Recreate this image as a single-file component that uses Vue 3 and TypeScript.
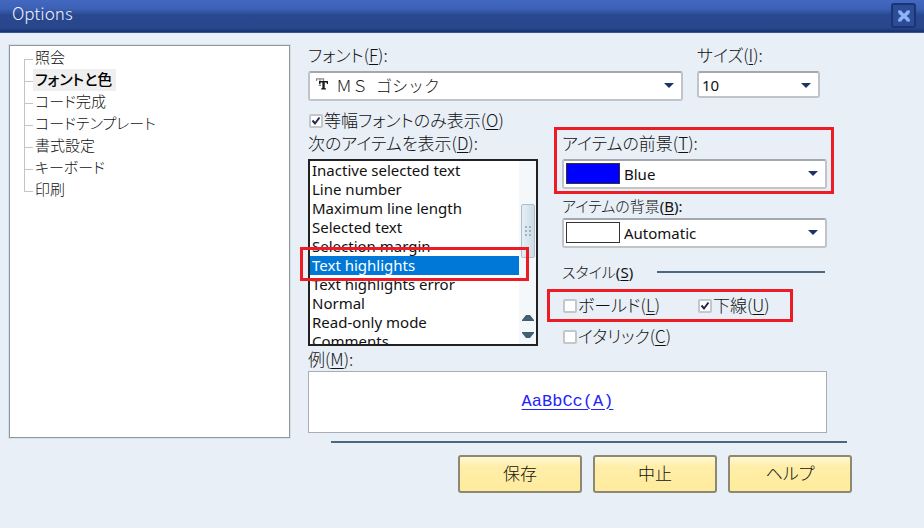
<script setup lang="ts">
import { ref } from 'vue'

const categories: string[] = [
  '照会',
  'フォントと色',
  'コード完成',
  'コードテンプレート',
  '書式設定',
  'キーボード',
  '印刷',
]
const activeCategory = ref('フォントと色')

const items: string[] = [
  'Inactive selected text',
  'Line number',
  'Maximum line length',
  'Selected text',
  'Selection margin',
  'Text highlights',
  'Text highlights error',
  'Normal',
  'Read-only mode',
  'Comments',
]
const activeItem = ref('Text highlights')

const fontName = ref('ＭＳ\u2002ゴシック')
const fontSize = ref('10')
const foreground = ref('Blue')
const background = ref('Automatic')
const fixedOnly = ref(true)
const bold = ref(false)
const underline = ref(true)
const italic = ref(false)
</script>

<template>
  <div class="dialog" role="dialog" aria-labelledby="dialog-title">
    <header class="titlebar">
      <h1 id="dialog-title">Options</h1>
      <button class="close" type="button" aria-label="Close">
        <svg width="14" height="14" viewBox="0 0 14 14" aria-hidden="true">
          <path d="M2.5 3 L11.5 11 M11.5 3 L2.5 11" stroke="#8fb4f8" stroke-width="3.6" fill="none" />
          <path d="M1 2.5h3.5M9.5 2.5H13M1 11.5h3.5M9.5 11.5H13" stroke="#8fb4f8" stroke-width="2" />
        </svg>
      </button>
    </header>

    <div class="content">
      <nav class="tree">
        <ul>
          <li v-for="c in categories" :key="c">
            <button
              type="button"
              :class="{ active: c === activeCategory }"
              @click="activeCategory = c"
            >{{ c }}</button>
          </li>
        </ul>
      </nav>

      <main class="settings">
        <div class="font-row">
          <div class="field font-field">
            <label class="caption" for="font">フォント(<u>F</u>):</label>
            <div class="combo">
              <select id="font" v-model="fontName" class="with-icon">
                <option>{{ fontName }}</option>
              </select>
              <svg class="tt" width="13" height="12" viewBox="0 0 13 12" aria-hidden="true">
                <path d="M0.5 3V0.8H7.5V3M4 1V7.5M2.5 7.5H5" stroke="#8a8a8a" stroke-width="1.2" fill="none" />
                <path d="M3 3H12V6H11L10.5 4.4H8.7V10L10 10.4V11.4H5.2V10.4L6.4 10V4.4H4.5L4 6H3Z" fill="#1c1c1c" />
              </svg>
              <svg class="arrow" width="10" height="5" viewBox="0 0 10 5" aria-hidden="true"><path d="M0 0H10L5 5Z" /></svg>
            </div>
          </div>
          <div class="field size-field">
            <label class="caption" for="size">サイズ(<u>I</u>):</label>
            <div class="combo">
              <select id="size" v-model="fontSize" class="short">
                <option>10</option>
              </select>
              <svg class="arrow" width="10" height="5" viewBox="0 0 10 5" aria-hidden="true"><path d="M0 0H10L5 5Z" /></svg>
            </div>
          </div>
        </div>

        <label class="check fixed"><input v-model="fixedOnly" type="checkbox" /><span>等幅フォントのみ表示(<u>O</u>)</span></label>

        <div class="columns">
          <div class="list-col">
            <div id="list-caption" class="caption">次のアイテムを表示(<u>D</u>):</div>
            <div class="list">
              <div class="rows" role="radiogroup" aria-labelledby="list-caption">
                <label v-for="i in items" :key="i" :class="{ selected: i === activeItem }">
                  <input v-model="activeItem" type="radio" name="item" :value="i" />{{ i }}
                </label>
              </div>
              <div class="scroll" aria-hidden="true">
                <div class="thumb"><i v-for="n in 6" :key="n"></i></div>
                <svg width="12" height="26" viewBox="0 0 12 26">
                  <path d="M0 7V6L4 1H8L12 6V7ZM0 18H12V19L8 24H4L0 19Z" fill="#435f74" />
                </svg>
              </div>
              <span class="mark mark-list"></span>
            </div>
          </div>

          <div class="style-col">
            <div class="field">
              <label class="caption" for="fg">アイテムの前景(<u>T</u>):</label>
              <div class="combo">
                <select id="fg" v-model="foreground" class="with-swatch">
                  <option>Blue</option>
                </select>
                <span class="swatch blue"></span>
                <svg class="arrow" width="10" height="5" viewBox="0 0 10 5" aria-hidden="true"><path d="M0 0H10L5 5Z" /></svg>
              </div>
              <span class="mark mark-fg"></span>
            </div>
            <div class="field bg-field">
              <label class="caption small" for="bg">アイテムの背景<span class="ui">(<u>B</u>):</span></label>
              <div class="combo">
                <select id="bg" v-model="background" class="with-swatch">
                  <option>Automatic</option>
                </select>
                <span class="swatch"></span>
                <svg class="arrow" width="10" height="5" viewBox="0 0 10 5" aria-hidden="true"><path d="M0 0H10L5 5Z" /></svg>
              </div>
            </div>
            <fieldset>
              <legend><span>スタイル<span class="ui">(<u>S</u>)</span></span></legend>
              <div class="checks">
                <label class="check"><input v-model="bold" type="checkbox" /><span>ボールド(<u>L</u>)</span></label>
                <label class="check"><input v-model="underline" type="checkbox" /><span>下線(<u>U</u>)</span></label>
                <span class="mark mark-style"></span>
              </div>
              <label class="check"><input v-model="italic" type="checkbox" /><span>イタリック(<u>C</u>)</span></label>
            </fieldset>
          </div>
        </div>

        <div class="caption sample-caption">例(<u>M</u>):</div>
        <div class="sample"><span>AaBbCc(A)</span></div>
      </main>
    </div>

    <footer>
      <hr />
      <div class="actions">
        <button type="button">保存</button>
        <button type="button">中止</button>
        <button type="button">ヘルプ</button>
      </div>
    </footer>
  </div>
</template>

<style>
body {
  background: #e8eff7;
}
</style>

<style scoped>
.dialog {
  min-height: 100vh;
  box-sizing: border-box;
  background: #e8eff7;
  color: #111;
  font: 300 17px/20px "Noto Sans CJK JP", sans-serif;
  font-feature-settings: "palt";
}
.dialog * {
  box-sizing: border-box;
}
button,
select,
input {
  font: inherit;
  font-feature-settings: inherit;
  color: inherit;
  margin: 0;
}
u {
  text-decoration-thickness: 1px;
  text-underline-offset: 2px;
}
.titlebar {
  display: flex;
  justify-content: space-between;
  align-items: flex-start;
  height: 33px;
  padding: 3px 8px 0 12px;
  background: linear-gradient(#4268c0 0, #3c60b4 9px, #29488f 15px, #28468c 28px, #15306e 32px);
  border-bottom: 1px solid #3a5593;
}
h1 {
  margin: 0;
  font-size: 17px;
  font-weight: 300;
  line-height: 20px;
  color: #eef3ff;
}
.close {
  display: flex;
  align-items: center;
  justify-content: center;
  width: 25px;
  height: 25px;
  padding: 0;
  border: 2px solid #1a3476;
  border-radius: 3px;
  background: #2c4c97;
}
.content {
  display: flex;
  gap: 18px;
  padding: 12px 97px 0 9px;
}
.tree {
  flex: 0 0 281px;
  height: 393px;
  padding: 1px 0 0 14px;
  background: #fff;
  border: 1px solid #8f979f;
  box-shadow: 0 0 0 1px #d9dfe6;
}
.tree ul {
  margin: 0;
  padding: 0;
  list-style: none;
}
.tree li {
  display: flex;
  align-items: center;
  height: 22px;
  background:
    linear-gradient(#c4c4c4, #c4c4c4) 0 0 / 1px 100% no-repeat,
    linear-gradient(#c4c4c4, #c4c4c4) 0 12px / 9px 1px no-repeat;
}
.tree li:first-child {
  background-position: 0 12px, 0 12px;
}
.tree li:last-child {
  background-size: 1px 12px, 9px 1px;
}
.tree button {
  height: 22px;
  margin-left: 9px;
  padding: 0 4px 2px 2px;
  border: 0;
  background: none;
  font-size: 15px;
  line-height: 20px;
}
.tree .active {
  background: #efefef;
  font-weight: 500;
  color: #000;
}
.settings {
  flex: 1;
  min-width: 0;
}
.font-row {
  display: flex;
  gap: 14px;
  height: 56px;
}
.font-field {
  flex: 1;
}
.size-field {
  flex: 0 0 123px;
  margin-right: 7px;
}
.field {
  position: relative;
}
.caption {
  display: block;
  height: 22px;
  margin-bottom: 4px;
  white-space: nowrap;
}
.ui {
  font-family: "Noto Sans", sans-serif;
  font-weight: 400;
}
.combo {
  position: relative;
}
select {
  appearance: none;
  display: block;
  width: 100%;
  height: 30px;
  padding: 0 24px 0 3px;
  border: 2px solid #c0c4c8;
  border-top-color: #a4a8ac;
  border-radius: 3px;
  background: #fff;
  font-family: "Noto Sans", "Noto Sans CJK JP", sans-serif;
  font-size: 15px;
  font-weight: 400;
}
.short {
  height: 27px;
}
.with-icon {
  padding: 0 24px 2px 26px;
  font-family: "Noto Sans CJK JP", sans-serif;
  font-size: 16px;
  font-weight: 300;
  font-feature-settings: normal;
}
.with-swatch {
  padding-left: 60px;
}
.tt {
  position: absolute;
  left: 8px;
  top: 7px;
}
.arrow {
  position: absolute;
  right: 9px;
  top: 12px;
  fill: #1d3566;
  pointer-events: none;
}
.swatch {
  position: absolute;
  left: 4px;
  top: 4px;
  width: 54px;
  height: 21px;
  border: 1px solid #333;
  background: #fff;
  pointer-events: none;
}
.swatch.blue {
  background: #00f;
}
.check {
  display: flex;
  align-items: center;
  height: 22px;
  white-space: nowrap;
}
.check span {
  height: 22px;
}
.check input {
  appearance: none;
  flex: none;
  width: 14px;
  height: 14px;
  margin: 0 1px;
  border: 2px solid #c3c6ca;
  border-radius: 2px;
  background: #fff;
}
.check input:checked {
  background: #fff
    url("data:image/svg+xml,%3Csvg xmlns='http://www.w3.org/2000/svg' viewBox='0 0 10 10'%3E%3Cpath d='M1.5 4.5L4 7.5L8.5 1.5' fill='none' stroke='%23262650' stroke-width='2'/%3E%3C/svg%3E")
    center / 10px 10px no-repeat;
}
.fixed {
  margin-top: 9px;
}
.columns {
  display: flex;
  gap: 24px;
  margin-top: 1px;
}
.list-col {
  flex: 0 0 230px;
}
.list {
  position: relative;
  display: flex;
  height: 187px;
  border: 2px solid #222;
  background: #fff;
}
.rows {
  flex: 1;
  overflow: hidden;
  font: 400 15px/19px "Noto Sans", sans-serif;
}
.rows label {
  display: block;
  height: 19px;
  padding-left: 2px;
  white-space: nowrap;
}
.rows input {
  appearance: none;
  display: none;
}
.rows .selected {
  background: #0078d7;
  color: #fff;
}
.scroll {
  display: flex;
  flex-direction: column;
  align-items: center;
  justify-content: space-between;
  flex: 0 0 17px;
  padding: 43px 1px 4px;
  background: #f5f8fb;
}
.thumb {
  display: grid;
  grid-template-columns: 2px 2px;
  grid-auto-rows: 2px;
  gap: 2px;
  place-content: center;
  width: 14px;
  height: 54px;
  border: 1px solid #aebfcc;
  border-radius: 2px;
  background: linear-gradient(90deg, #e6eff6, #cddbe6);
}
.thumb i {
  background: #9fb2c0;
}
.mark {
  position: absolute;
  border: 3px solid #ed1c24;
  pointer-events: none;
}
.mark-list {
  left: -10px;
  right: 7px;
  top: 86px;
  height: 34px;
}
.mark-fg {
  inset: -6px -7px -5px -8px;
}
.mark-style {
  left: -15px;
  right: 34px;
  top: -6px;
  height: 33px;
}
.style-col {
  flex: 1;
  min-width: 0;
}
.bg-field {
  margin-top: 7px;
}
.small {
  margin-bottom: 0;
  font-size: 15px;
}
fieldset {
  margin: 13px 0 0;
  padding: 0;
  border: 0;
  min-width: 0;
}
legend {
  display: flex;
  align-items: center;
  gap: 24px;
  width: 100%;
  height: 22px;
  margin-bottom: 12px;
  padding: 0 2px 0 0;
  font-size: 15px;
}
legend::after {
  content: "";
  flex: 1;
  height: 2px;
  background: #4a6880;
}
.checks {
  position: relative;
  display: grid;
  grid-template-columns: 135px 1fr;
  margin-bottom: 9px;
}
.sample-caption {
  margin: 1px 0 0;
}
.sample {
  display: flex;
  align-items: center;
  justify-content: center;
  height: 62px;
  border: 1px solid #a9adb2;
  background: #fff;
  font: 400 17px/20px "Liberation Mono", monospace;
  color: #2323ff;
}
.sample span {
  text-decoration: underline 1px;
  text-underline-offset: 3px;
}
footer {
  padding: 3px 72px 0 331px;
}
hr {
  height: 2px;
  margin: 0 5px 12px 0;
  border: 0;
  background: #4a6880;
}
.actions {
  display: flex;
  justify-content: flex-end;
  gap: 11px;
}
.actions button {
  width: 124px;
  height: 38px;
  padding: 0 0 2px;
  border: 2px solid #8d8873;
  border-radius: 3px;
  background: linear-gradient(#fff7d2 0, #ffeea8 10px, #feeb9d 100%);
}
</style>
